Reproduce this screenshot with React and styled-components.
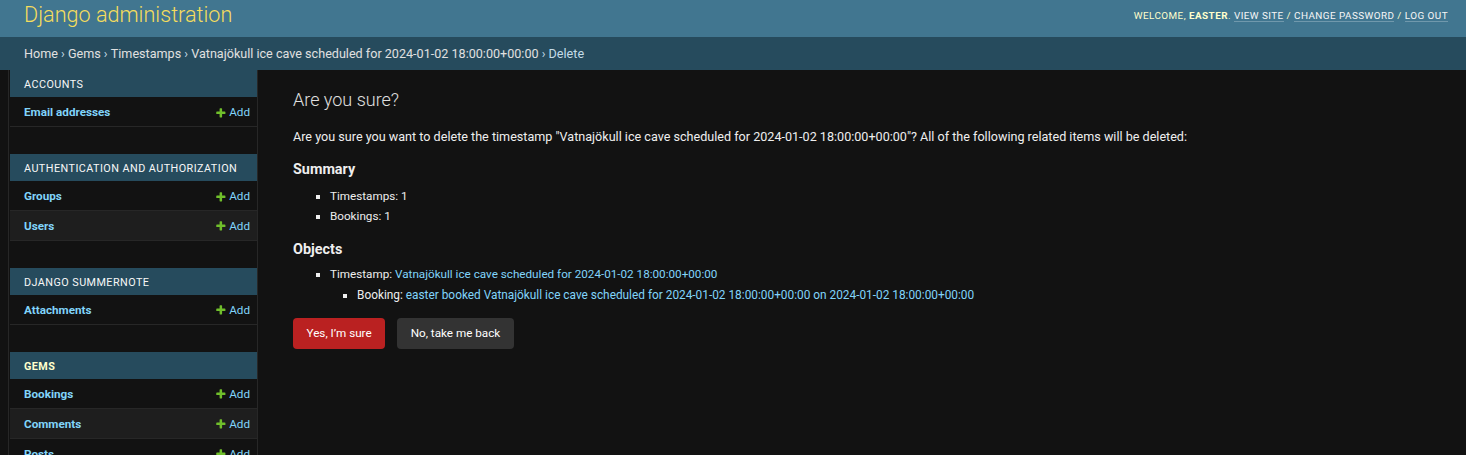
import React from 'react';
import styled, { createGlobalStyle } from 'styled-components';

const GlobalStyle = createGlobalStyle`
  html, body {
    margin: 0;
    padding: 0;
  }
  body {
    background: #121212;
    color: #eeeeee;
    font-family: Roboto, "Liberation Sans", sans-serif;
    font-size: 12.6px;
  }
  a {
    text-decoration: none;
  }
`;

const Header = styled.header`
  display: flex;
  justify-content: space-between;
  align-items: flex-start;
  height: 37px;
  box-sizing: border-box;
  padding: 3px 18px 0 24px;
  background: #417690;
  color: #ffffcc;
`;

const Branding = styled.div`
  font-size: 21.6px;
  font-weight: 300;
  line-height: 24px;
  color: #f5dd5d;
`;

const UserTools = styled.div`
  margin-top: 6px;
  font-size: 9.9px;
  line-height: 14px;
  letter-spacing: 0.45px;
  text-transform: uppercase;
  color: #ffffcc;

  strong {
    font-weight: 700;
  }
`;

const ToolLink = styled.a`
  color: #f7f7f7;
  border-bottom: 1px solid rgba(255, 255, 255, 0.25);
`;

const Breadcrumbs = styled.nav`
  display: flex;
  align-items: center;
  height: 33px;
  box-sizing: border-box;
  padding: 0 24px;
  background: #264b5d;
  color: #c4dce8;
  font-size: 12.6px;
  white-space: pre;

  a {
    color: #e0e0e0;
  }
`;

const Main = styled.div`
  display: flex;
  min-height: calc(100vh - 70px);
`;

const ToggleStrip = styled.div`
  flex: 0 0 8px;
  border-right: 1px solid #272727;
  background: #121212;
`;

const Sidebar = styled.nav`
  flex: 0 0 247px;
  padding-left: 1px;
  border-right: 1px solid #272727;
`;

const Module = styled.div`
  margin-bottom: 27px;
`;

const Caption = styled.div`
  display: flex;
  align-items: center;
  box-sizing: border-box;
  height: 27.2px;
  padding: 2px 0 0 14px;
  background: #264b5d;
  color: ${p => (p.$current ? '#ffffcc' : '#f7f7f7')};
  font-size: 10.8px;
  font-weight: ${p => (p.$current ? 700 : 400)};
  letter-spacing: 0.45px;
  text-transform: uppercase;
`;

const Row = styled.div`
  display: flex;
  align-items: center;
  justify-content: space-between;
  box-sizing: border-box;
  height: 29.8px;
  padding: 1.8px 7px 0 14px;
  border-bottom: 1px solid #272727;
  background: ${p => (p.$current ? '#00363a' : p.$alt ? '#1e1e1e' : 'transparent')};
  font-size: 11.7px;
`;

const ModelLink = styled.a`
  color: #81d4fa;
  font-weight: 700;
`;

const AddLink = styled.a`
  display: flex;
  align-items: center;
  gap: 3px;
  color: #81d4fa;

  svg {
    width: 11.7px;
    height: 11.7px;
  }
`;

const Content = styled.main`
  flex: 1;
  padding: 19px 35px;
`;

const Title = styled.h1`
  margin: 0 0 18px;
  font-size: 18px;
  font-weight: 300;
  color: #e0e0e0;
`;

const Text = styled.p`
  margin: 0 0 15.4px;
  line-height: 1.4;
`;

const SubTitle = styled.h2`
  margin: 14.4px 0 0;
  font-size: 14.4px;
  font-weight: 700;
  color: #eeeeee;
`;

const List = styled.ul`
  margin: ${p => p.$top}px 0 0;
  padding-left: ${p => (p.$nested ? 27 : 37)}px;
`;

const Item = styled.li`
  list-style-type: square;
  padding: 1px 0;
  font-size: ${p => (p.$nested ? 11.85 : 11.7)}px;
  line-height: 18px;

  a {
    color: #81d4fa;
  }
`;

const Actions = styled.div`
  display: flex;
  gap: 12px;
  margin-top: 12px;
`;

const Button = styled.button`
  height: 31px;
  padding: 0 13.5px;
  border: 0;
  border-radius: 4px;
  background: ${p => (p.$danger ? '#ba2121' : '#333333')};
  color: #ffffff;
  font-family: Roboto, "Liberation Sans", sans-serif;
  font-size: 11.7px;
  cursor: pointer;
`;

const PlusIcon = () => (
  <svg viewBox="0 0 1792 1792" aria-hidden="true">
    <path
      fill="#70bf2b"
      d="M1600 796v192q0 40-28 68t-68 28h-416v416q0 40-28 68t-68 28h-192q-40 0-68-28t-28-68v-416h-416q-40 0-68-28t-28-68v-192q0-40 28-68t68-28h416v-416q0-40 28-68t68-28h192q40 0 68 28t28 68v416h416q40 0 68 28t28 68z"
    />
  </svg>
);

const apps = [
  { name: 'Accounts', models: ['Email addresses'] },
  { name: 'Authentication and Authorization', models: ['Groups', 'Users'] },
  { name: 'Django Summernote', models: ['Attachments'] },
  { name: 'Gems', current: true, models: ['Bookings', 'Comments', 'Posts', 'Timestamps'] },
];

const stamp = 'Vatnajökull ice cave scheduled for 2024-01-02 18:00:00+00:00';

const App = () => (
  <>
    <GlobalStyle />
    <Header>
      <Branding>Django administration</Branding>
      <UserTools>
        Welcome, <strong>easter</strong>. <ToolLink href="#">View site</ToolLink> /{' '}
        <ToolLink href="#">Change password</ToolLink> / <ToolLink href="#">Log out</ToolLink>
      </UserTools>
    </Header>
    <Breadcrumbs>
      <a href="#">Home</a> › <a href="#">Gems</a> › <a href="#">Timestamps</a> ›{' '}
      <a href="#">{stamp}</a> › Delete
    </Breadcrumbs>
    <Main>
      <ToggleStrip />
      <Sidebar>
        {apps.map(app => (
          <Module key={app.name}>
            <Caption $current={app.current}>{app.name}</Caption>
            {app.models.map((model, i) => (
              <Row key={model} $alt={i % 2 === 1} $current={app.current && model === 'Timestamps'}>
                <ModelLink href="#">{model}</ModelLink>
                <AddLink href="#">
                  <PlusIcon />
                  Add
                </AddLink>
              </Row>
            ))}
          </Module>
        ))}
      </Sidebar>
      <Content>
        <Title>Are you sure?</Title>
        <Text>
          Are you sure you want to delete the timestamp "{stamp}"? All of the following related
          items will be deleted:
        </Text>
        <SubTitle>Summary</SubTitle>
        <List $top={8.2}>
          <Item>Timestamps: 1</Item>
          <Item>Bookings: 1</Item>
        </List>
        <SubTitle>Objects</SubTitle>
        <List $top={6.2}>
          <Item>
            Timestamp: <a href="#">{stamp}</a>
            <List $nested $top={2}>
              <Item $nested>
                Booking: <a href="#">easter booked {stamp} on 2024-01-02 18:00:00+00:00</a>
              </Item>
            </List>
          </Item>
        </List>
        <Actions>
          <Button $danger>Yes, I’m sure</Button>
          <Button>No, take me back</Button>
        </Actions>
      </Content>
    </Main>
  </>
);

export default App;
